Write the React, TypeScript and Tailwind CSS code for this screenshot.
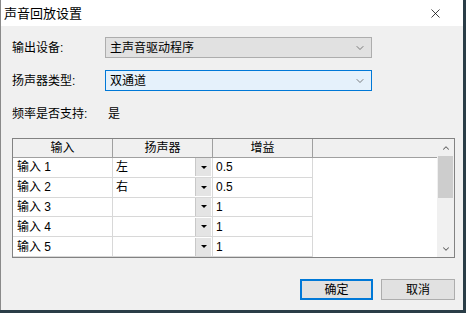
import { ChevronDown, ChevronUp, X } from "lucide-react";

const rows = [
  { name: "输入 1", speaker: "左", gain: "0.5" },
  { name: "输入 2", speaker: "右", gain: "0.5" },
  { name: "输入 3", speaker: "", gain: "1" },
  { name: "输入 4", speaker: "", gain: "1" },
  { name: "输入 5", speaker: "", gain: "1" },
];

const font = "font-['Liberation_Sans','Noto_Sans_CJK_SC',sans-serif]";

function Combo({ value, focused }: { value: string; focused?: boolean }) {
  return (
    <div
      className={`w-[267px] h-[21px] flex items-center justify-between pl-[4px] pr-[5px] border ${
        focused ? "border-[#0078d7] bg-[#e5f1fb]" : "border-[#adadad] bg-[#e1e1e1]"
      }`}
    >
      <span className="text-[12px] leading-none text-black">{value}</span>
      <ChevronDown size={12} strokeWidth={1.5} className="text-[#555]" />
    </div>
  );
}

export default function App() {
  return (
    <div className={`w-[466px] h-[313px] bg-[#2a3d47] ${font}`}>
      <div className="w-[463px] h-[310px] flex flex-col bg-[#f0f0f0] border-l border-[#8a8a8a]">
        {/* Title bar */}
        <div className="h-[26px] bg-white flex items-center justify-between pl-[3px] pr-[20px]">
          <span className="text-[13px] leading-none text-black">声音回放设置</span>
          <X size={15} strokeWidth={1.2} className="text-black" />
        </div>

        <div className="flex flex-col pl-[11px]">
          <div className="mt-[11px] flex items-center">
            <span className="w-[93px] text-[12px] text-black">输出设备:</span>
            <Combo value="主声音驱动程序" />
          </div>
          <div className="mt-[12px] flex items-center">
            <span className="w-[93px] text-[12px] text-black">扬声器类型:</span>
            <Combo value="双通道" focused />
          </div>
          <div className="mt-[15px] flex items-center h-[16px]">
            <span className="w-[96px] text-[12px] text-black">频率是否支持:</span>
            <span className="text-[12px] text-black">是</span>
          </div>

          {/* Grid */}
          <div className="mt-[16px] w-[443px] h-[120px] border border-[#828282] bg-white flex">
            <div className="flex-1 flex flex-col">
              <div className="h-[19px] flex bg-[#f0f0f0] border-b border-[#a0a0a0]">
                <div className="w-[300px] flex">
                  <div className="w-[100px] border-r border-[#a0a0a0] flex items-center justify-center text-[12px]">输入</div>
                  <div className="w-[100px] border-r border-[#a0a0a0] flex items-center justify-center text-[12px]">扬声器</div>
                  <div className="w-[100px] border-r border-[#a0a0a0] flex items-center justify-center text-[12px]">增益</div>
                </div>
                <div className="flex-1" />
              </div>
              {rows.map((r) => (
                <div key={r.name} className="h-[20px] flex">
                  <div className="w-[300px] flex border-b border-[#d8d8d8]">
                    <div className="w-[100px] border-r border-[#d8d8d8] flex items-center pl-[4px] text-[12px] text-black">
                      {r.name}
                    </div>
                    <div className="w-[100px] border-r border-[#d8d8d8] flex items-center justify-between pl-[3px] pr-[1px] text-[12px] text-black">
                      <span>{r.speaker}</span>
                      <div className="w-[16px] h-[18px] bg-[#e4e4e4] border-l border-[#c8c8c8] flex items-center justify-center">
                        <div className="w-0 h-0 border-l-[3px] border-r-[3px] border-t-[3px] border-l-transparent border-r-transparent border-t-black" />
                      </div>
                    </div>
                    <div className="w-[100px] border-r border-[#d8d8d8] flex items-center pl-[3px] text-[12px] text-black">
                      {r.gain}
                    </div>
                  </div>
                  <div className="flex-1" />
                </div>
              ))}
            </div>
            {/* Scrollbar */}
            <div className="w-[17px] bg-[#f0f0f0] flex flex-col items-center">
              <div className="h-[17px] flex items-center justify-center">
                <ChevronUp size={10} strokeWidth={2.5} className="text-[#606060]" />
              </div>
              <div className="w-[15px] h-[42px] bg-[#cdcdcd]" />
              <div className="flex-1" />
              <div className="h-[17px] flex items-center justify-center">
                <ChevronDown size={10} strokeWidth={2.5} className="text-[#606060]" />
              </div>
            </div>
          </div>

          {/* Buttons */}
          <div className="mt-[21px] w-[443px] flex justify-end gap-[8px]">
            <button className="w-[73px] h-[21px] border-2 border-[#0078d7] bg-[#e1e1e1] text-[12px] text-black flex items-center justify-center">
              确定
            </button>
            <button className="w-[74px] h-[21px] border border-[#adadad] bg-[#e1e1e1] text-[12px] text-black flex items-center justify-center">
              取消
            </button>
          </div>
        </div>
      </div>
    </div>
  );
}
